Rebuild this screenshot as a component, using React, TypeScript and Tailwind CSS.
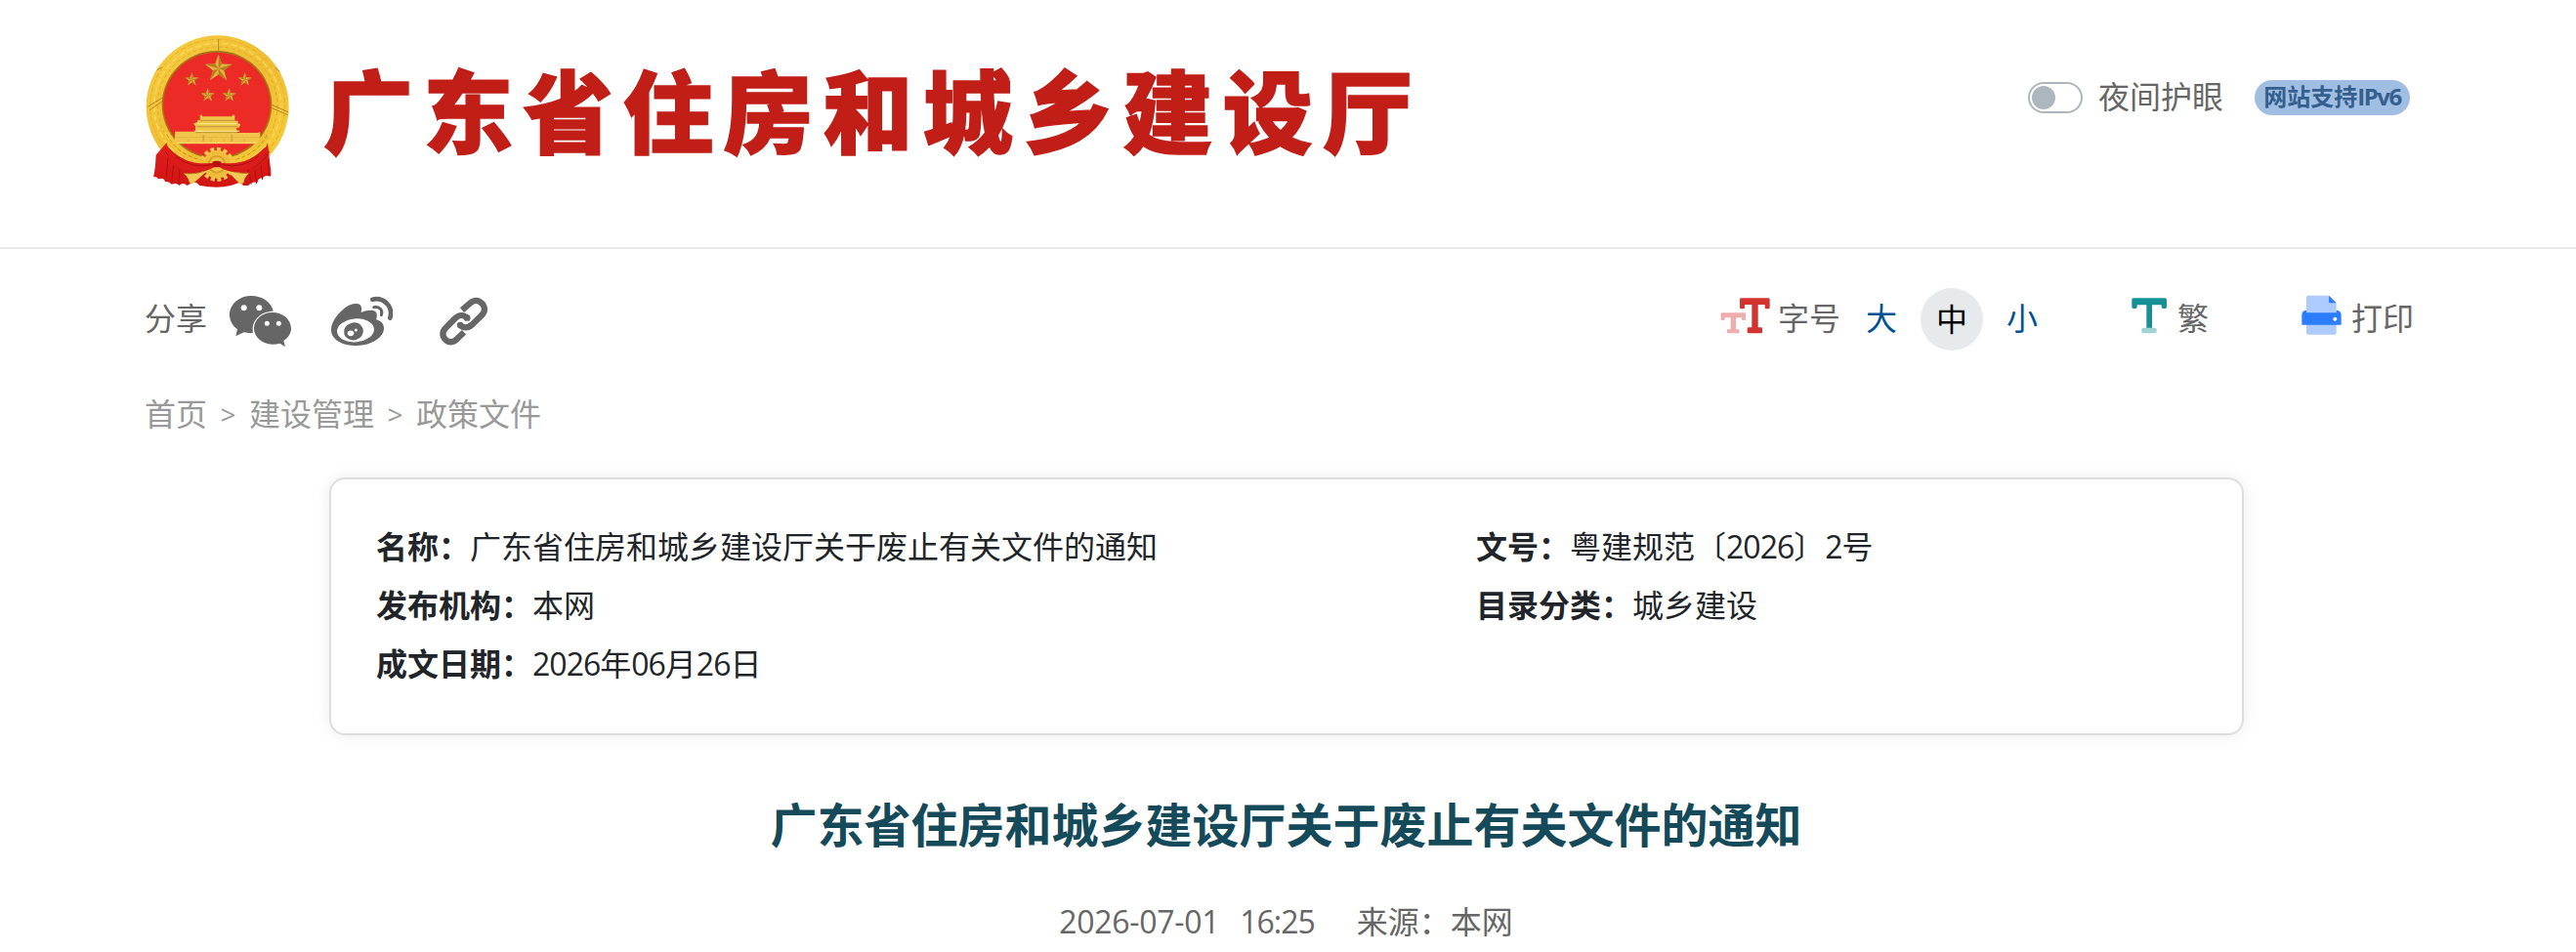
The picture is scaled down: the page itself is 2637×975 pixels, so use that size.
import type { ReactNode } from "react";

const DEPARTMENT = "广东省住房和城乡建设厅";
const TITLE = "广东省住房和城乡建设厅关于废止有关文件的通知";

const SMALL_STARS = [
  { x: 199, y: 185 },
  { x: 362, y: 185 },
  { x: 248, y: 233 },
  { x: 314, y: 233 },
];

function starPoints(cx: number, cy: number, r: number) {
  const pts: string[] = [];
  for (let i = 0; i < 10; i++) {
    const radius = i % 2 === 0 ? r : r * 0.4;
    const a = (Math.PI / 5) * i - Math.PI / 2;
    pts.push(`${(cx + radius * Math.cos(a)).toFixed(1)},${(cy + radius * Math.sin(a)).toFixed(1)}`);
  }
  return pts;
}

function Star({ cx, cy, r }: { cx: number; cy: number; r: number }) {
  const pts = starPoints(cx, cy, r);
  return (
    <g>
      <polygon points={pts.join(" ")} fill="#e3b53a" />
      {[0, 2, 4, 6, 8].map((i) => (
        <polygon key={i} points={`${cx},${cy} ${pts[i]} ${pts[(i + 1) % 10]}`} fill="#b57d22" />
      ))}
    </g>
  );
}

function Emblem() {
  return (
    <svg viewBox="57 48 441 468" className="w-[147px] h-[156px] shrink-0">
      <defs>
        <linearGradient id="gold" x1="0" y1="0" x2="1" y2="1">
          <stop offset="0" stopColor="#f6cf3f" />
          <stop offset="0.5" stopColor="#efbd33" />
          <stop offset="1" stopColor="#f8cf38" />
        </linearGradient>
        <linearGradient id="drape" x1="0" y1="0" x2="0" y2="1">
          <stop offset="0" stopColor="#e01f1c" />
          <stop offset="1" stopColor="#d01513" />
        </linearGradient>
      </defs>

      {/* Wheat ring */}
      <ellipse cx="278" cy="268" rx="219" ry="219" fill="url(#gold)" />
      <ellipse cx="278" cy="266" rx="207" ry="205" fill="none" stroke="#e5b034" strokeWidth="3" strokeDasharray="16 7" />
      <ellipse cx="278" cy="265" rx="195" ry="192" fill="none" stroke="#f8d250" strokeWidth="6" strokeDasharray="20 8" />
      <ellipse cx="278" cy="264" rx="184" ry="180" fill="none" stroke="#e0a830" strokeWidth="3" strokeDasharray="11 9" />
      <path d="M281 60v38M92 155l14-8M455 148l14 12M64 268l48-30M70 278l46-32M430 255l66 30M428 265l66 28" stroke="#b98522" strokeWidth="3" fill="none" />

      {/* Field */}
      <ellipse cx="276" cy="262" rx="169" ry="166" fill="#a87618" />
      <ellipse cx="276" cy="262" rx="164" ry="161" fill="#ec2a26" />
      <Star cx={281} cy={151} r={44} />
      {SMALL_STARS.map((s) => (
        <Star key={s.x} cx={s.x} cy={s.y} r={22} />
      ))}

      {/* Gate */}
      <path d="M224 293h7v5h92v-5h8v18h10v8l8 3-5 10h-7v16h64l8-2v36H147v-38h63v-16l-6-8 12-5v-6h8z" fill="#f0c54a" />
      <path d="M224 310h108M214 329h126M210 347h130" stroke="#b98a2b" strokeWidth="2.5" />
      <path d="M216 320h120M208 343h138" stroke="#ffe680" strokeWidth="4" />
      <path d="M147 362h262" stroke="#e0b040" strokeWidth="2" />
      <path d="M147 379h262" stroke="#f8d864" strokeWidth="4" />
      <path d="M235 354v20M322 354v20" stroke="#d3a33c" strokeWidth="5" />
      <path d="M190 367v8M258 367v8M298 367v8M360 367v8" stroke="#dcae45" strokeWidth="4" />

      {/* Lower wreath and drapery */}
      <path d="M113 345q32 78 116 96l20-10q-83-20-120-82zM441 340q-32 82-116 101l-20-10q83-20 118-86z" fill="url(#gold)" />
      <path d="M122 352q33 66 112 80M430 354q-30 60-104 78" stroke="#c88f22" strokeWidth="3" strokeDasharray="12 7" fill="none" />
      <path d="M122 378q6 38 58 58 45 15 84 8l24 0q42 4 84-10 50-20 60-56l8 72q4 24 1 32-20-6-24 6-14-4-16 12-20-2-28 10h-16q-6-10-14-8l-24 8q-40 10-96 0-10-14-24-8l-14 8q-14-12-24 0-8-10-24-4-8-10-20-8-4-14-20-8-8-10-16-6 6-22 8-68z" fill="url(#drape)" />
      <path d="M119 405q20 46 66 54 42 7 78-4M437 405q-20 42-66 54-42 8-78-4M128 395q30 44 80 50M428 395q-30 42-80 50" stroke="#ad1011" strokeWidth="3" fill="none" />
      <path d="M126 424l-5 58M143 448l-5 46M162 458l-4 48M432 430l3 50M412 448l4 44M392 460l6 44M372 462l10 44" stroke="#b10e0f" strokeWidth="3" />
      <circle cx="276" cy="445" r="43" fill="#efbd3b" />
      <circle cx="276" cy="445" r="47" fill="none" stroke="#f2c64a" strokeWidth="12" strokeDasharray="12 8" />
      <circle cx="276" cy="445" r="28" fill="#d9a02c" />
      <circle cx="276" cy="445" r="22" fill="#f1c546" />
      <path d="M174 473q50 4 82-16l-54 48q-6 0-10-4-4-18-18-28zM376 472q-48 2-78-16l50 50q6 0 10-4 2-18 18-30z" fill="#f3ca52" />
      <path d="M174 473q50 4 82-16M376 472q-48 2-78-16" stroke="#b47c1d" strokeWidth="3" fill="none" />
      <path d="M130 396q56 56 132 44l6-5h16l6 5q76 12 130-44l12-8q-12 70-92 80-30 2-56-14h-16q-30 16-62 14-80-14-88-76z" fill="#da1c1a" />
      <path d="M150 422q50 38 112 24M404 420q-50 40-112 26" stroke="#a91011" strokeWidth="3" fill="none" />
      <path d="M263 437q12-6 26 0l-2 16h-22z" fill="#bc1111" />
    </svg>
  );
}

function WechatIcon() {
  return (
    <svg viewBox="312 66 192 162" className="w-16 h-[54px]" fill="#666">
      <path d="M382 69c-37 0-67 26-67 58 0 18 9 34 24 45l-5 21 25-12c8 2 17 3 28 2-7-34 20-67 62-67-5-27-33-47-67-47z" />
      <circle cx="359" cy="106" r="9" fill="#fff" />
      <circle cx="406" cy="106" r="9" fill="#fff" />
      <path d="M447 120c-32 0-57 22-57 49s25 49 57 49c8 0 15-1 22-3l17 10-5-18c14-9 23-22 23-38 0-27-26-49-57-49z" />
      <circle cx="430" cy="154" r="7.5" fill="#fff" />
      <circle cx="466" cy="154" r="7.5" fill="#fff" />
    </svg>
  );
}

function WeiboIcon() {
  return (
    <svg viewBox="624 66 192 162" className="w-16 h-[54px]">
      <path d="M706 93c-20-3-45 16-62 38-12 15-17 28-17 42 0 31 36 49 78 49 48 0 84-27 84-53 0-15-10-23-24-27 5-14 3-25-9-28-10-2-24 1-37 6 3-15 2-25-13-27z" fill="#666" />
      <ellipse cx="702" cy="175" rx="57" ry="36" transform="rotate(-5 702 175)" fill="#fff" />
      <ellipse cx="696" cy="178" rx="30" ry="27" transform="rotate(-15 696 178)" fill="#666" />
      <ellipse cx="687" cy="184" rx="10" ry="8.5" fill="#fff" />
      <circle cx="703" cy="174" r="4.5" fill="#fff" />
      <path d="M754 80c30-7 65 16 54 57" fill="none" stroke="#666" strokeWidth="14" strokeLinecap="round" />
      <path d="M758 104c16-4 29 9 23 24" fill="none" stroke="#666" strokeWidth="9" strokeLinecap="round" />
    </svg>
  );
}

function LinkIcon() {
  return (
    <svg viewBox="957 75 153 153" className="w-[51px] h-[51px]" fill="none" stroke="#666" strokeWidth="19">
      <path d="M1029 116l24-21c13-12 27-10 37 0 10 11 11 25-1 37l-30 29c-12 11-27 10-37 1" />
      <path d="M1035 184l-22 21c-12 12-25 11-35 1-10-10-11-24 1-36l29-29c12-12 27-11 37-1" />
      <path d="M1023 162h1M1044 140h1" strokeLinecap="round" />
    </svg>
  );
}

function FontSizeIcon() {
  return (
    <svg viewBox="60 74 153 111" className="w-[51px] h-[37px]">
      <path d="M64 120h71q3 0 3 3v16q0 4-4 4h-4q-4 0-4-4v-4h-18v36h8q3 0 3 3v6q0 3-3 3H84q-3 0-3-3v-6q0-3 3-3h8v-36H74v4q0 4-4 4h-4q-4 0-4-4v-16q0-3 2-3z" fill="#efadad" />
      <path d="M124 75h84q4 0 4 4v24q0 5-5 5h-5q-5 0-5-5v-8h-21v70h9q4 0 4 4v10q0 4-4 4h-38q-4 0-4-4v-10q0-4 4-4h10V95h-22v8q0 5-5 5h-5q-5 0-5-5V79q0-4 4-4z" fill="#d4322e" />
    </svg>
  );
}

function TraditionalIcon() {
  return (
    <svg viewBox="187 74 108 111" className="w-9 h-[37px]">
      <path d="M192 75h98q5 0 5 5v22q0 5-5 5h-6q-5 0-5-5v-6h-29v72h-17V96h-29v6q0 5-5 5h-6q-5 0-5-5V80q0-5 4-5z" fill="#149096" />
      <rect x="218" y="166" width="46" height="17" rx="5" fill="#a1d3d5" />
    </svg>
  );
}

function PrintIcon() {
  return (
    <svg viewBox="708 67 123 123" className="w-[41px] h-[41px]">
      <path d="M728 69h64l23 23v92q0 5-5 5h-82q-5 0-5-5V74q0-5 5-5z" fill="#adcbff" />
      <path d="M792 69l23 23h-19q-4 0-4-4z" fill="#2c7eff" />
      <path d="M723 114v8h92v-8q15 2 15 15v30H709v-30q0-13 14-15z" fill="#2c7eff" />
      <circle cx="811" cy="141" r="6" fill="#fff" />
    </svg>
  );
}

function Num({ children }: { children: ReactNode }) {
  return <span className="tracking-[-1px]">{children}</span>;
}

function Field({ label, children }: { label: string; children: ReactNode }) {
  return (
    <div className="h-[60px] whitespace-nowrap">
      <strong className="font-bold">{label}：</strong>
      {children}
    </div>
  );
}

export default function App() {
  return (
    <div className="h-[975px] w-full overflow-hidden bg-white text-[32px] leading-[60px] text-[#666] font-['Open_Sans','Noto_Sans_CJK_SC',sans-serif]">
      <header className="flex h-[255px] items-start justify-between border-b-2 border-[#ebebeb] pl-[149px] pr-[170px]">
        <div className="flex pt-9">
          <Emblem />
          <h1 className="ml-[35px] mt-[6px] whitespace-nowrap text-[92px] leading-[136px] font-black tracking-[10.3px] text-[#c01e17] [-webkit-text-stroke:1.5px_#c01e17] font-['Noto_Sans_CJK_SC',sans-serif]">
            {DEPARTMENT}
          </h1>
        </div>
        <div className="mt-[70px] flex h-[60px] items-center">
          <button aria-label="夜间护眼" className="flex h-8 w-14 items-center rounded-full border-2 border-[#adb5bd] px-0.5">
            <span className="size-6 rounded-full bg-[#adb5bd]" />
          </button>
          <span className="-mt-0.5 ml-4">夜间护眼</span>
          <span className="ml-8 h-9 w-[159px] rounded-full bg-[#a0bee1] text-center text-2xl leading-[34px] font-bold whitespace-nowrap text-[#345f8f]">
            网站支持<span className="tracking-[-1.5px]">IPv6</span>
          </span>
        </div>
      </header>

      <div className="mt-10 flex h-16 items-center justify-between pl-[148px] pr-[166px]">
        <div className="flex items-center">
          <span className="-mt-0.5">分享</span>
          <div className="ml-[22px] flex items-center pt-1">
            <WechatIcon />
            <span className="ml-10">
              <WeiboIcon />
            </span>
            <span className="ml-[47px]">
              <LinkIcon />
            </span>
          </div>
        </div>

        <div className="flex items-center">
          <span className="-mt-2 mr-2">
            <FontSizeIcon />
          </span>
          <span className="-mt-0.5">字号</span>
          <button className="-mt-0.5 ml-[26px] w-8 text-[#005293]">大</button>
          <button className="ml-6 size-16 rounded-full bg-[#e7eaed] text-black">中</button>
          <button className="-mt-0.5 ml-6 w-8 text-[#005293]">小</button>
          <span className="-mt-2 mr-[11px] ml-24">
            <TraditionalIcon />
          </span>
          <span className="-mt-0.5">繁</span>
          <span className="-mt-2.5 mr-2.5 ml-[95px]">
            <PrintIcon />
          </span>
          <span className="-mt-0.5">打印</span>
        </div>
      </div>

      <nav className="mt-[35px] flex pl-[148px] text-[#999]">
        <a>首页</a>
        <span className="w-[43px] text-center text-[28px]">&gt;</span>
        <a>建设管理</a>
        <span className="w-[43px] text-center text-[28px]">&gt;</span>
        <a>政策文件</a>
      </nav>

      <section className="mt-[35px] ml-[337px] flex h-[264px] w-[1960px] rounded-2xl border-2 border-[#ddd] pt-[39px] pl-[46px] text-[#212529] shadow-[0_0_16px_rgba(0,0,0,0.08)]">
        <div className="w-[1126px]">
          <Field label="名称">{TITLE}</Field>
          <Field label="发布机构">本网</Field>
          <Field label="成文日期">
            <Num>2026</Num>年<Num>06</Num>月<Num>26</Num>日
          </Field>
        </div>
        <div>
          <Field label="文号">
            粤建规范〔<Num>2026</Num>〕<Num>2</Num>号
          </Field>
          <Field label="目录分类">城乡建设</Field>
        </div>
      </section>

      <article className="w-[2633px] text-center">
        <h2 className="mt-[56px] text-5xl leading-[72px] font-bold text-[#144a5a]">{TITLE}</h2>
        <div className="mt-[33px] flex justify-center whitespace-nowrap">
          <span className="tracking-[-0.3px]">2026-07-01</span>
          <span className="ml-[21px]">
            <Num>16:25</Num>
          </span>
          <span className="ml-[43px]">来源：本网</span>
        </div>
      </article>
    </div>
  );
}
